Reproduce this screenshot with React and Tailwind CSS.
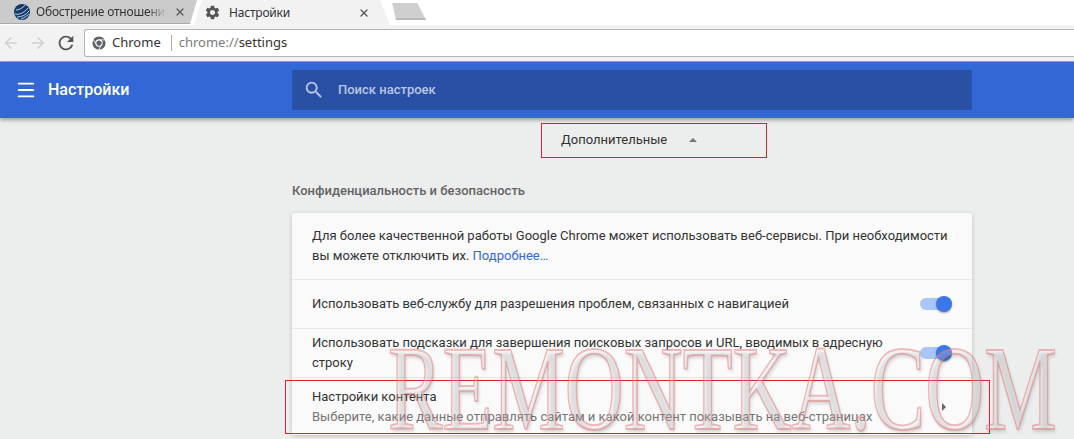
import React from 'react';
import { Menu, ArrowLeft, ArrowRight, X } from 'lucide-react';
import { MdSettings, MdRefresh, MdSearch } from 'react-icons/md';

const Toggle = () => (
  <div className="relative w-8 h-[12px] rounded-full bg-[#a9c6f7]">
    <div className="absolute right-0 top-[-2px] w-4 h-4 rounded-full bg-[#3b78e7] shadow-[0_1px_2px_rgba(0,0,0,0.35)]" />
  </div>
);

const GlobeIcon = () => (
  <svg width="16" height="16" viewBox="0 0 16 16">
    <circle cx="8" cy="8" r="8" fill="#123a6b" />
    <path d="M1 10c4 1 9-1 13-6M3 13c4 0 9-2 12-6M2 6c3 0 7-2 9-5M7 15c3-1 6-3 8-5" stroke="#dfe8f2" strokeWidth="0.9" fill="none" />
  </svg>
);

const ChromeIcon = () => (
  <svg width="14" height="14" viewBox="0 0 16 16">
    <circle cx="8" cy="8" r="7.5" fill="#5f6368" />
    <circle cx="8" cy="8" r="3.6" fill="#5f6368" stroke="#fff" strokeWidth="1.2" />
    <path d="M8 4.4h7M4.9 9.8 1.4 3.7M11.1 9.8l-3.5 6" stroke="#fff" strokeWidth="0.9" />
  </svg>
);

const App = () => {
  return (
    <div className="relative w-[1074px] h-[439px] overflow-hidden bg-[#eceded] font-['Roboto',sans-serif]">
      {/* tab strip */}
      <div className="flex h-[25px] bg-white font-['Noto_Sans',sans-serif] text-[12px] tracking-[-0.2px] text-[#333]">
        <div className="flex items-center w-[197px] h-[24px] pl-[14px] bg-[#cbcbcb] border-b border-[#a9a9a9] [clip-path:polygon(0_0,100%_0,190px_100%,0_100%)]">
          <GlobeIcon />
          <span className="ml-[6px] w-[131px] overflow-hidden whitespace-nowrap [mask-image:linear-gradient(to_right,black_85%,transparent)]">Обострение отношений</span>
          <X size={12} strokeWidth={2.5} className="ml-[7px] text-[#555]" />
        </div>
        <div className="flex items-center w-[196px] ml-[-3px] pl-[14px] pr-[8px] bg-[#f2f2f2] [clip-path:polygon(8px_0,186px_0,100%_100%,0_100%)]">
          <MdSettings size={17} className="ml-[-4px] text-[#555]" />
          <span className="ml-[8px] flex-1">Настройки</span>
          <X size={12} strokeWidth={2.5} className="mr-[12px] text-[#555]" />
        </div>
        <div className="w-[34px] h-[17px] mt-[3px] ml-[2px] bg-[#cfcfcf] border-b-2 border-[#b9b9b9] [clip-path:polygon(0_0,75%_0,100%_100%,12%_100%)]" />
      </div>

      {/* toolbar */}
      <div className="flex items-center h-[37px] pl-[2px] bg-[#f2f2f2] border-b border-[#a6a6a6]">
        <ArrowLeft size={18} strokeWidth={2} className="text-[#d0d0d0]" />
        <ArrowRight size={18} strokeWidth={2} className="ml-[9px] text-[#d0d0d0]" />
        <MdRefresh size={22} className="ml-[8px] text-[#555]" />
        <div className="flex items-center flex-1 h-[28px] ml-[7px] pl-[7px] bg-white rounded-l-[3px] border border-[#b5b5b5] border-r-0 font-['Noto_Sans',sans-serif] text-[13px]">
          <ChromeIcon />
          <span className="ml-[6px] text-[#333]">Chrome</span>
          <span className="w-px h-[16px] ml-[10px] bg-[#aaa]" />
          <span className="ml-[7px] text-[#7b7b7b]">chrome://<span className="text-[#333]">settings</span></span>
        </div>
      </div>

      {/* settings header */}
      <div className="flex items-center h-[56px] bg-[#3367d6] shadow-[0_2px_4px_rgba(0,0,0,0.35)]">
        <Menu size={22} strokeWidth={2} className="ml-[15px] text-white" />
        <span className="ml-[11px] w-[244px] text-[16px] font-medium text-white">Настройки</span>
        <div className="flex items-center w-[680px] h-[40px] rounded-[2px] bg-[#2a50a6]">
          <MdSearch size={22} className="ml-[11px] text-[#b9c7e6]" />
          <span className="ml-[13px] text-[13px] font-medium text-[#b9c7e6]">Поиск настроек</span>
        </div>
      </div>

      {/* content */}
      <div className="ml-[292px] w-[680px]">
        <div className="flex items-center h-[34px] mt-[5px] ml-[269px] text-[13px] text-[#333]">
          <span>Дополнительные</span>
          <span className="ml-[22px] w-0 h-0 border-x-[4px] border-x-transparent border-b-[4px] border-b-[#777]" />
        </div>
        <h2 className="mt-[26px] text-[13px] leading-[16px] font-medium text-[#646464]">Конфиденциальность и безопасность</h2>
        <div className="mt-[14px] bg-[#fafafa] rounded-[2px] text-[13px] leading-[20px] text-[#333] shadow-[0_1px_4px_rgba(0,0,0,0.2)]">
          <div className="h-[67px] px-5 pt-[13px] border-b border-[#e6e6e6]">
            Для более качественной работы Google Chrome может использовать веб-сервисы. При необходимости вы можете отключить их. <span className="text-[#3367d6]">Подробнее…</span>
          </div>
          <div className="flex items-center justify-between h-[49px] pl-5 pr-5 border-b border-[#e6e6e6]">
            <span>Использовать веб-службу для разрешения проблем, связанных с навигацией</span>
            <Toggle />
          </div>
          <div className="flex items-center justify-between h-[49px] pl-5 pr-5 border-b border-[#e6e6e6]">
            <span className="w-[590px]">Использовать подсказки для завершения поисковых запросов и URL, вводимых в адресную строку</span>
            <Toggle />
          </div>
          <div className="flex items-center justify-between h-[57px] pl-5 pr-[26px]">
            <div>
              <div>Настройки контента</div>
              <div className="text-[#757575]">Выберите, какие данные отправлять сайтам и какой контент показывать на веб-страницах</div>
            </div>
            <span className="w-0 h-0 border-y-[4px] border-y-transparent border-l-[4px] border-l-[#666]" />
          </div>
        </div>
      </div>

      {/* annotation boxes */}
      <div className="absolute left-[541px] top-[123px] w-[226px] h-[35px] border border-[#e0202c]" />
      <div className="absolute left-[285px] top-[380px] w-[705px] h-[54px] border border-[#e0202c]" />

      {/* watermark */}
      <div className="absolute left-[388px] top-[321px] origin-left scale-x-[0.68] whitespace-nowrap font-['Liberation_Serif',serif] text-[120px] leading-[136px] text-[rgba(255,255,255,0.2)] [-webkit-text-stroke:2px_rgba(225,120,120,0.5)] [text-shadow:2px_3px_4px_rgba(0,0,0,0.15)]">
        REMONTKA.COM
      </div>
    </div>
  );
};

export default App;
